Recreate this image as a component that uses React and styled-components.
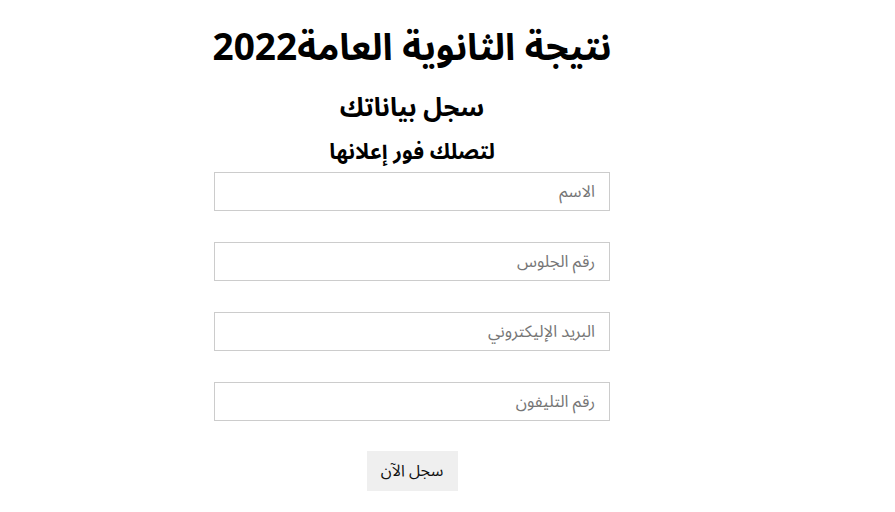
import React from "react";
import styled, { createGlobalStyle } from "styled-components";

const Global = createGlobalStyle`
  html, body { margin: 0; padding: 0; background: #fff; }
  body { font-family: "Noto Sans Arabic", "Noto Sans", "DejaVu Sans", sans-serif; color: #000; }
`;

const Page = styled.div`
  display: flex;
  justify-content: flex-start;
  padding: 0 0 0 214px;
`;

const Column = styled.form`
  width: 396px;
  display: flex;
  flex-direction: column;
  align-items: center;
  direction: rtl;
`;

const Title = styled.h1`
  margin: 18px 0 0;
  font-size: 37px;
  font-weight: bold;
  line-height: 60px;
  white-space: nowrap;
`;

const Sub = styled.h2`
  margin: ${(p) => p.$mt}px 0 0;
  font-size: ${(p) => p.$size}px;
  font-weight: bold;
  line-height: ${(p) => p.$lh}px;
  white-space: nowrap;
`;

const Field = styled.input`
  box-sizing: border-box;
  width: 100%;
  height: 39px;
  margin-top: ${(p) => p.$mt}px;
  border: 1px solid #ccc;
  padding: 0 14px;
  font-family: "Noto Sans Arabic", "Noto Sans", "DejaVu Sans", sans-serif;
  font-size: 16.5px;
  direction: rtl;
  outline: none;
  &::placeholder { color: #767676; }
`;

const Button = styled.button`
  margin-top: 30px;
  width: 91px;
  height: 40px;
  border: none;
  background: #efefef;
  font-family: "Noto Sans Arabic", "Noto Sans", "DejaVu Sans", sans-serif;
  font-size: 16px;
  color: #111;
`;

export default function App() {
  return (
    <>
      <Global />
      <Page>
        <Column onSubmit={(e) => e.preventDefault()}>
          <Title>نتيجة الثانوية العامة2022</Title>
          <Sub $mt={10} $size={25.5} $lh={40}>سجل بياناتك</Sub>
          <Sub $mt={7} $size={21.5} $lh={34}>لتصلك فور إعلانها</Sub>
          <Field $mt={3} placeholder="الاسم" />
          <Field $mt={31} placeholder="رقم الجلوس" />
          <Field $mt={31} placeholder="البريد الإليكتروني" />
          <Field $mt={31} placeholder="رقم التليفون" />
          <Button type="submit">سجل الآن</Button>
        </Column>
      </Page>
    </>
  );
}
